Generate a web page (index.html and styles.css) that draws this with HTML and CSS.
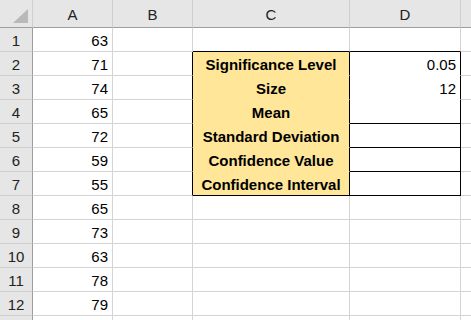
FILE: index.html
```html
<!DOCTYPE html>
<html>
<head>
<meta charset="utf-8">
<link rel="stylesheet" href="styles.css">
</head>
<body>
<div class="sheet">
  <div class="corner"><span class="tri"></span></div>
  <div class="colhdr">A</div>
  <div class="colhdr">B</div>
  <div class="colhdr">C</div>
  <div class="colhdr">D</div>
  <div class="colhdr last"></div>

  <div class="rowhdr">1</div>
  <div class="cell num">63</div>
  <div class="cell"></div>
  <div class="cell top-edge"></div>
  <div class="cell top-edge"></div>
  <div class="cell"></div>

  <div class="rowhdr">2</div>
  <div class="cell num">71</div>
  <div class="cell left-edge"></div>
  <div class="cell label">Significance Level</div>
  <div class="cell val plain">0.05</div>
  <div class="cell"></div>

  <div class="rowhdr">3</div>
  <div class="cell num">74</div>
  <div class="cell left-edge"></div>
  <div class="cell label">Size</div>
  <div class="cell val plain">12</div>
  <div class="cell"></div>

  <div class="rowhdr">4</div>
  <div class="cell num">65</div>
  <div class="cell left-edge"></div>
  <div class="cell label">Mean</div>
  <div class="cell val boxed"></div>
  <div class="cell"></div>

  <div class="rowhdr">5</div>
  <div class="cell num">72</div>
  <div class="cell left-edge"></div>
  <div class="cell label">Standard Deviation</div>
  <div class="cell val boxed"></div>
  <div class="cell"></div>

  <div class="rowhdr">6</div>
  <div class="cell num">59</div>
  <div class="cell left-edge"></div>
  <div class="cell label">Confidence Value</div>
  <div class="cell val boxed"></div>
  <div class="cell"></div>

  <div class="rowhdr">7</div>
  <div class="cell num">55</div>
  <div class="cell left-edge"></div>
  <div class="cell label bottom">Confidence Interval</div>
  <div class="cell val boxed"></div>
  <div class="cell"></div>

  <div class="rowhdr">8</div>
  <div class="cell num">65</div>
  <div class="cell"></div>
  <div class="cell"></div>
  <div class="cell"></div>
  <div class="cell"></div>

  <div class="rowhdr">9</div>
  <div class="cell num">73</div>
  <div class="cell"></div>
  <div class="cell"></div>
  <div class="cell"></div>
  <div class="cell"></div>

  <div class="rowhdr">10</div>
  <div class="cell num">63</div>
  <div class="cell"></div>
  <div class="cell"></div>
  <div class="cell"></div>
  <div class="cell"></div>

  <div class="rowhdr">11</div>
  <div class="cell num">78</div>
  <div class="cell"></div>
  <div class="cell"></div>
  <div class="cell"></div>
  <div class="cell"></div>

  <div class="rowhdr">12</div>
  <div class="cell num">79</div>
  <div class="cell"></div>
  <div class="cell"></div>
  <div class="cell"></div>
  <div class="cell"></div>

  <div class="rowhdr"></div>
  <div class="cell"></div>
  <div class="cell"></div>
  <div class="cell"></div>
  <div class="cell"></div>
  <div class="cell"></div>
</div>
</body>
</html>
```

FILE: styles.css
```css
html, body {
  margin: 0;
  padding: 0;
  background: #ffffff;
  overflow: hidden;
}

.sheet {
  display: grid;
  grid-template-columns: 33px 80px 80px 157px 111px 40px;
  grid-template-rows: 28px repeat(13, 24px);
  width: 471px;
  height: 320px;
  overflow: hidden;
  font-family: "Liberation Sans", Arial, sans-serif;
  font-size: 15px;
  color: #000;
}

.sheet > div {
  box-sizing: border-box;
  display: flex;
  align-items: center;
  overflow: hidden;
  white-space: nowrap;
}

.corner {
  position: relative;
  background: #e6e6e6;
  border-right: 1px solid #d0d0d0;
  border-bottom: 1px solid #9e9e9e;
}

.tri {
  position: absolute;
  right: 4px;
  bottom: 4px;
  width: 0;
  height: 0;
  border-left: 15px solid transparent;
  border-bottom: 14px solid #b9b9b9;
}

.colhdr {
  background: #e6e6e6;
  border-right: 1px solid #cfcfcf;
  border-bottom: 1px solid #9e9e9e;
  justify-content: center;
  color: #222;
  padding-top: 2px;
}

.rowhdr {
  background: #e6e6e6;
  border-right: 1px solid #9e9e9e;
  border-bottom: 1px solid #cfcfcf;
  justify-content: center;
  color: #222;
  padding-top: 1px;
}

.cell {
  border-right: 1px solid #d4d4d4;
  border-bottom: 1px solid #d4d4d4;
  padding: 1px 4px 0 4px;
}

.num {
  justify-content: flex-end;
}

.top-edge {
  border-bottom-color: #000;
}

.left-edge {
  border-right-color: #000;
}

.label {
  background: #ffe699;
  border-right-color: #000;
  border-bottom-color: #ffe699;
  justify-content: center;
  font-weight: bold;
  padding-left: 0;
  padding-right: 0;
}

.label.bottom {
  border-bottom-color: #000;
}

.val {
  justify-content: flex-end;
  border-right-color: #000;
}

.val.plain {
  border-bottom-color: #ffffff;
}

.val.boxed {
  border-bottom-color: #000;
}
```
